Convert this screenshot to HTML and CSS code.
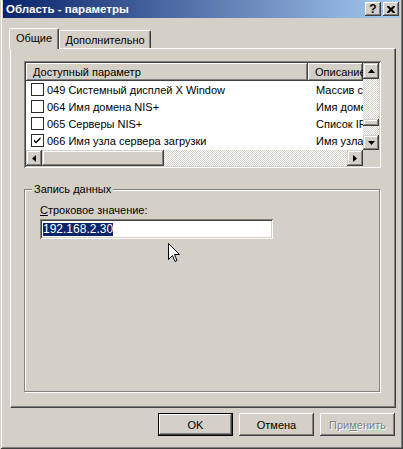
FILE: index.html
```html
<!DOCTYPE html>
<html>
<head>
<meta charset="utf-8">
<link rel="stylesheet" href="styles.css">
</head>
<body>
<div class="window">
  <div class="titlebar">
    <span class="title">Область - параметры</span>
    <div class="tbtns">
      <span class="tbtn help">?</span>
      <span class="tbtn close"><svg width="8" height="7" viewBox="0 0 8 7"><path d="M0 0h2l2 2 2-2h2v1l-2.5 2.5L8 6v1H6L4 5 2 7H0V6l2.5-2.5L0 1z" fill="#000"/></svg></span>
    </div>
  </div>
  <div class="tabs">
    <div class="tab active">Общие</div>
    <div class="tab">Дополнительно</div>
  </div>
  <div class="panel">
    <div class="listview">
      <div class="lv-main">
        <div class="lv-header">
          <div class="hcell c1">Доступный параметр</div>
          <div class="hcell c2">Описание</div>
        </div>
        <div class="row"><div class="cell c1"><span class="chk"></span>049 Системный дисплей X Window</div><div class="cell c2">Массив серверов</div></div>
        <div class="row"><div class="cell c1"><span class="chk"></span>064 Имя домена NIS+</div><div class="cell c2">Имя домена NIS</div></div>
        <div class="row"><div class="cell c1"><span class="chk"></span>065 Серверы NIS+</div><div class="cell c2">Список IP-адресов</div></div>
        <div class="row"><div class="cell c1"><span class="chk"><svg width="11" height="11" viewBox="0 0 11 11"><path d="M2 4.5 L4 6.5 L8.5 2 L8.5 4 L4 8.5 L2 6.5 Z" fill="#000"/></svg></span>066 Имя узла сервера загрузки</div><div class="cell c2">Имя узла сервера</div></div>
      </div>
      <div class="vscroll">
        <div class="sbtn up"><svg width="7" height="4" viewBox="0 0 7 4"><path d="M3.5 0 L7 4 L0 4 Z" fill="#000"/></svg></div>
        <div class="track t1"></div>
        <div class="thumb vthumb"></div>
        <div class="track t2"></div>
        <div class="sbtn down"><svg width="7" height="4" viewBox="0 0 7 4"><path d="M0 0 L7 0 L3.5 4 Z" fill="#000"/></svg></div>
      </div>
      <div class="hscroll">
        <div class="sbtn left"><svg width="4" height="7" viewBox="0 0 4 7"><path d="M0 3.5 L4 0 L4 7 Z" fill="#000"/></svg></div>
        <div class="thumb hthumb"></div>
        <div class="track htrack"></div>
        <div class="sbtn right"><svg width="4" height="7" viewBox="0 0 4 7"><path d="M0 0 L4 3.5 L0 7 Z" fill="#000"/></svg></div>
      </div>
      <div class="corner"></div>
    </div>
    <div class="group">
      <span class="legend">Запись данных</span>
      <div class="flabel"><u>С</u>троковое значение:</div>
      <div class="input"><span class="sel">192.168.2.30</span></div>
    </div>
  </div>
  <div class="buttons">
    <div class="btn default">OK</div>
    <div class="btn">Отмена</div>
    <div class="btn disabled">При<u>м</u>енить</div>
  </div>
  <svg class="cursor" width="12" height="20" viewBox="0 0 12 20"><path d="M0.5 0.5 L0.5 16.5 L4.5 12.5 L7 18.5 L9 17.5 L6.5 11.5 L11.5 11.5 Z" fill="#fff" stroke="#000" stroke-width="1"/></svg>
</div>
</body>
</html>
```
FILE: styles.css
```css
* { box-sizing: border-box; }
html, body { margin: 0; padding: 0; }
body {
  width: 403px;
  height: 449px;
  background: #D4D0C8;
  font-family: "Liberation Sans", Arial, sans-serif;
  font-size: 11px;
  color: #000;
  overflow: hidden;
}
.window {
  position: relative;
  width: 403px;
  height: 449px;
  background: #D4D0C8;
  padding: 0 3px 3px 3px;
  box-shadow: inset 1px 0 #D4D0C8, inset -1px -1px #404040, inset 2px 0 #fff, inset -2px -2px #808080;
}
.titlebar {
  height: 18px;
  background: linear-gradient(to right, #0A246A, #A6CAF0);
  display: flex;
  align-items: center;
  justify-content: space-between;
  padding: 0 1px 0 3px;
}
.title {
  color: #fff;
  font-weight: bold;
  font-size: 11.5px;
}
.tbtns { display: flex; gap: 2px; }
.tbtn {
  width: 16px;
  height: 14px;
  background: #D4D0C8;
  box-shadow: inset -1px -1px #404040, inset 1px 1px #fff, inset -2px -2px #808080, inset 2px 2px #D4D0C8;
  display: flex;
  align-items: center;
  justify-content: center;
}
.help { font-weight: bold; font-size: 12px; line-height: 14px; padding-bottom: 1px; }
.tabs {
  height: 20px;
  margin-top: 10px;
  margin-left: 6px;
  display: flex;
  align-items: flex-start;
}
.tab {
  height: 18px;
  margin-top: 2px;
  padding: 0 4px;
  border: 1px solid;
  border-color: #fff #404040 transparent #fff;
  border-bottom: none;
  border-radius: 2px 2px 0 0;
  box-shadow: inset -1px 0 #808080;
  display: flex;
  align-items: center;
  justify-content: center;
  width: 92px;
}
.tab.active {
  position: relative;
  z-index: 1;
  width: 50px;
  height: 21px;
  margin-top: 0;
  background: #D4D0C8;
  padding-bottom: 2px;
}
.panel {
  margin-left: 7px;
  width: 386px;
  height: 360px;
  border-left: 1px solid #fff;
  border-top: 1px solid #fff;
  border-right: 1px solid #404040;
  border-bottom: 1px solid #404040;
  box-shadow: inset -1px -1px #808080;
  padding: 12px 0 0 13px;
}
.listview {
  width: 357px;
  height: 107px;
  padding: 2px;
  background: #fff;
  box-shadow: inset 1px 1px #808080, inset -1px -1px #fff, inset 2px 2px #404040, inset -2px -2px #D4D0C8;
  display: grid;
  grid-template-columns: 337px 16px;
  grid-template-rows: 87px 16px;
}
.lv-main { background: #fff; overflow: hidden; }
.lv-header { display: flex; height: 18px; }
.hcell {
  height: 18px;
  background: #D4D0C8;
  box-shadow: inset -1px -1px #404040, inset 1px 1px #fff, inset -2px -2px #808080;
  display: flex;
  align-items: center;
  padding-left: 7px;
  white-space: nowrap;
  overflow: hidden;
}
.hcell.c1 { width: 282px; flex: none; }
.hcell.c2 { flex: 1; padding-left: 7px; }
.row { display: flex; height: 17px; align-items: center; }
.cell { white-space: nowrap; overflow: hidden; display: flex; align-items: center; }
.cell.c1 { width: 282px; flex: none; padding-left: 5px; }
.cell.c2 { flex: 1; padding-left: 8px; }
.chk {
  width: 13px;
  height: 13px;
  border: 1px solid #2a2a2a;
  background: #fff;
  margin-right: 3px;
  flex: none;
  display: flex;
  align-items: center;
  justify-content: center;
}
.vscroll { display: flex; flex-direction: column; }
.hscroll { display: flex; }
.sbtn {
  background: #D4D0C8;
  box-shadow: inset -1px -1px #404040, inset 1px 1px #D4D0C8, inset -2px -2px #808080, inset 2px 2px #fff;
  display: flex;
  align-items: center;
  justify-content: center;
  flex: none;
}
.vscroll .sbtn { width: 16px; }
.up { height: 16px; }
.down { height: 15px; }
.hscroll .sbtn { width: 16px; height: 16px; }
.track {
  background: repeating-conic-gradient(#fff 0 25%, #D4D0C8 0 50%) 0 0 / 2px 2px;
}
.t1 { height: 40px; }
.t2 { height: 9px; }
.htrack { flex: 1; }
.thumb {
  background: #D4D0C8;
  box-shadow: inset -1px -1px #404040, inset 1px 1px #D4D0C8, inset -2px -2px #808080, inset 2px 2px #fff;
}
.vthumb { height: 7px; }
.hthumb { width: 122px; flex: none; }
.corner { background: #D4D0C8; }
.group {
  position: relative;
  margin-top: 21px;
  width: 356px;
  height: 203px;
  border: 1px solid #808080;
  box-shadow: inset 1px 1px #fff, 1px 1px #fff;
  padding: 13px 0 0 15px;
}
.legend {
  position: absolute;
  left: 7px;
  top: -8px;
  padding: 0 2px;
  background: #D4D0C8;
  line-height: 14px;
}
.flabel { line-height: 14px; }
.input {
  margin-top: 2px;
  width: 233px;
  height: 20px;
  background: #fff;
  padding: 2px 3px;
  box-shadow: inset 1px 1px #808080, inset -1px -1px #fff, inset 2px 2px #404040, inset -2px -2px #D4D0C8;
  display: flex;
  align-items: center;
}
.sel {
  background: #0A246A;
  color: #fff;
  line-height: 13px;
  height: 13px;
  font-size: 12px;
}
.buttons {
  margin-top: 5px;
  display: flex;
  justify-content: flex-end;
  gap: 6px;
  padding-right: 5px;
}
.btn {
  width: 75px;
  height: 23px;
  display: flex;
  align-items: center;
  justify-content: center;
  background: #D4D0C8;
  box-shadow: inset -1px -1px #404040, inset 1px 1px #fff, inset -2px -2px #808080, inset 2px 2px #D4D0C8;
}
.btn.default {
  box-shadow: inset 0 0 0 1px #000, inset -2px -2px #404040, inset 2px 2px #fff, inset -3px -3px #808080;
}
.btn.disabled {
  color: #808080;
  text-shadow: 1px 1px #fff;
}
.cursor {
  position: absolute;
  left: 168px;
  top: 243px;
}
```
